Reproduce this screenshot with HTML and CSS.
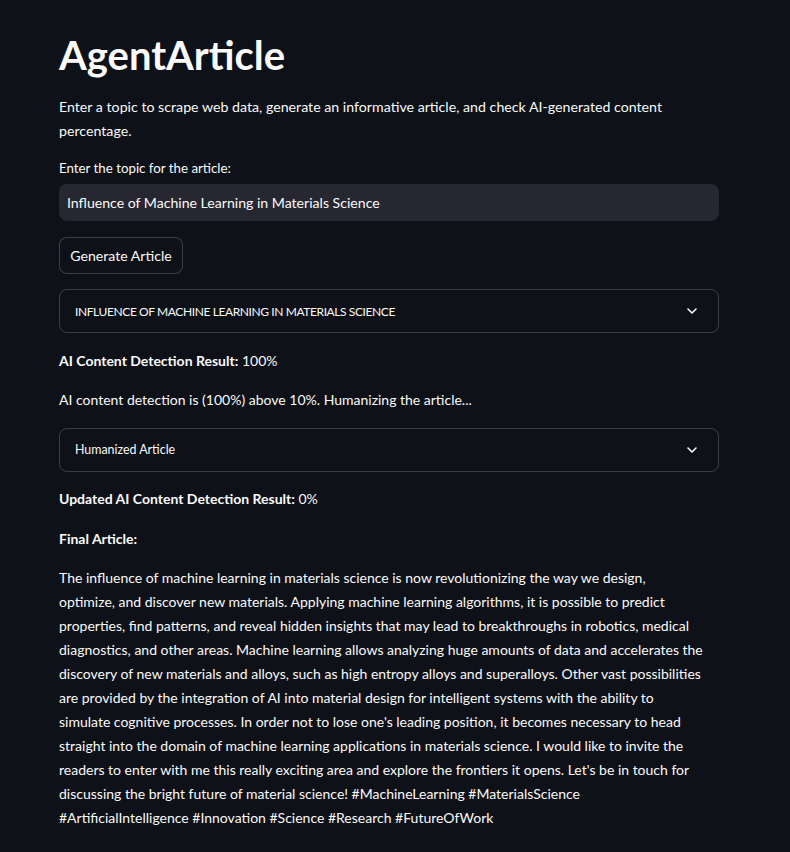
FILE: index.html
```html
<!DOCTYPE html>
<html lang="en">
<head>
<meta charset="utf-8">
<title>AgentArticle</title>
<link rel="stylesheet" href="styles.css">
</head>
<body>
<main class="app">
  <h1 class="title">AgentArticle</h1>
  <p class="text desc">Enter a topic to scrape web data, generate an informative article, and check AI-generated content<br>percentage.</p>
  <div class="field">
    <label class="label" for="topic">Enter the topic for the article:</label>
    <input class="input" id="topic" type="text" value="Influence of Machine Learning in Materials Science">
  </div>
  <div class="row"><button class="btn" type="button">Generate Article</button></div>
  <details class="expander">
    <summary class="summary"><span class="sum-text caps">INFLUENCE OF MACHINE LEARNING IN MATERIALS SCIENCE</span>
      <svg class="chev" width="10" height="6" viewBox="0 0 10 6"><path d="M1 1l4 4 4-4" fill="none" stroke="#fafafa" stroke-width="1.6" stroke-linecap="round" stroke-linejoin="round"/></svg>
    </summary>
  </details>
  <p class="text"><strong>AI Content Detection Result:</strong> 100%</p>
  <p class="text">AI content detection is (100%) above 10%. Humanizing the article...</p>
  <details class="expander">
    <summary class="summary"><span class="sum-text">Humanized Article</span>
      <svg class="chev" width="10" height="6" viewBox="0 0 10 6"><path d="M1 1l4 4 4-4" fill="none" stroke="#fafafa" stroke-width="1.6" stroke-linecap="round" stroke-linejoin="round"/></svg>
    </summary>
  </details>
  <p class="text"><strong>Updated AI Content Detection Result:</strong> 0%</p>
  <p class="text"><strong>Final Article:</strong></p>
  <p class="text article">The influence of machine learning in materials science is now revolutionizing the way we design,<br>optimize, and discover new materials. Applying machine learning algorithms, it is possible to predict<br>properties, find patterns, and reveal hidden insights that may lead to breakthroughs in robotics, medical<br>diagnostics, and other areas. Machine learning allows analyzing huge amounts of data and accelerates the<br>discovery of new materials and alloys, such as high entropy alloys and superalloys. Other vast possibilities<br>are provided by the integration of AI into material design for intelligent systems with the ability to<br>simulate cognitive processes. In order not to lose one's leading position, it becomes necessary to head<br>straight into the domain of machine learning applications in materials science. I would like to invite the<br>readers to enter with me this really exciting area and explore the frontiers it opens. Let's be in touch for<br>discussing the bright future of material science! #MachineLearning #MaterialsScience<br>#ArtificialIntelligence #Innovation #Science #Research #FutureOfWork</p>
</main>
</body>
</html>
```
FILE: styles.css
```css
* { box-sizing: border-box; }
html, body { margin: 0; padding: 0; }
body {
  background: #0e1117;
  color: #fafafa;
  font-family: "Source Sans Pro", Lato, "Liberation Sans", sans-serif;
  font-size: 14px;
  min-height: 852px;
}
.app {
  width: 660px;
  margin-left: 59px;
  padding-top: 31px;
  display: flex;
  flex-direction: column;
  gap: 15.5px;
}
.title {
  margin: 0;
  font-size: 40px;
  line-height: 48px;
  font-weight: 700;
}
.text {
  margin: 0;
  line-height: 24px;
  white-space: nowrap;
}
.desc { font-size: 14.2px; }
.text strong { font-weight: 700; }
.field { display: flex; flex-direction: column; gap: 7px; margin-top: 1px; }
.label { font-size: 13.3px; line-height: 18px; }
.input {
  height: 37px;
  width: 100%;
  border: none;
  border-radius: 8px;
  background: #262730;
  color: #fafafa;
  font: inherit;
  font-size: 14.1px;
  padding: 0 8px;
  outline: none;
}
.row { display: flex; }
.btn {
  height: 37px;
  width: 124px;
  padding: 0;
  background: #0e1117;
  color: #fafafa;
  border: 1px solid rgba(250,250,250,0.2);
  border-radius: 8px;
  font: inherit;
  font-size: 14.1px;
}
.expander {
  border: 1px solid rgba(250,250,250,0.2);
  border-radius: 8px;
}
.summary {
  list-style: none;
  height: 42px;
  display: flex;
  align-items: center;
  justify-content: space-between;
  padding: 0 21px 0 15px;
  font-size: 12.4px;
}
.summary::-webkit-details-marker { display: none; }
.caps { font-size: 12px; letter-spacing: -0.4px; }
.chev { display: block; }
```
